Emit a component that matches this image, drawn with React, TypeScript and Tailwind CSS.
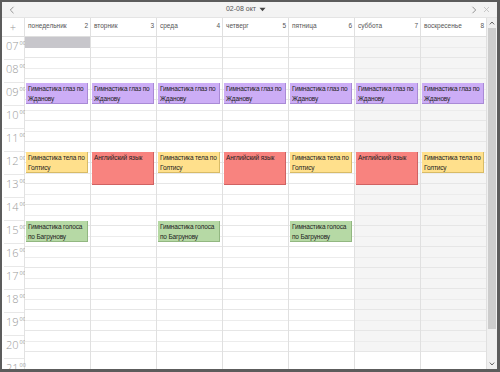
import React from "react";

const days: [string, number][] = [
  ["понедельник", 2],
  ["вторник", 3],
  ["среда", 4],
  ["четверг", 5],
  ["пятница", 6],
  ["суббота", 7],
  ["воскресенье", 8],
];

type Ev = { day: number; start: number; dur: number; title: string; cls: string };

const purple = "bg-[#ccadf6] border-[#a98ad6]";
const yellow = "bg-[#ffe08c] border-[#d8bb66]";
const red = "bg-[#f8837f] border-[#d06262]";
const green = "bg-[#b6d9a5] border-[#92b781]";

const events: Ev[] = [];
for (let d = 0; d < 7; d++) events.push({ day: d, start: 9, dur: 1, title: "Гимнастика глаз по Жданову", cls: purple });
[0, 2, 4, 6].forEach((d) => events.push({ day: d, start: 12, dur: 1, title: "Гимнастика тела по Голтису", cls: yellow }));
[1, 3, 5].forEach((d) => events.push({ day: d, start: 12, dur: 1.5, title: "Английский язык", cls: red }));
[0, 2, 4].forEach((d) => events.push({ day: d, start: 15, dur: 1, title: "Гимнастика голоса по Багрунову", cls: green }));

const hours = Array.from({ length: 15 }, (_, i) => 7 + i);
const HOUR = 23;

function HourCells({ weekend }: { weekend: boolean }) {
  return (
    <>
      {hours.map((h) => (
        <div key={h} className={weekend ? "bg-[#f5f5f5]" : "bg-white"}>
          <div className="h-[11px] border-b border-[#ececec]" />
          <div className="h-[10px] border-b border-[#e6e6e6]" />
        </div>
      ))}
    </>
  );
}

const small = { fontFamily: '"Liberation Sans", Arial, sans-serif' };

export default function App() {
  return (
    <div
      className="w-[500px] h-[372px] bg-[#5c5c5c] pt-[2px] pl-[2px] pr-[3px] pb-[3px] overflow-hidden"
      style={{ fontFamily: '"Open Sans", "Noto Sans", sans-serif' }}
    >
      <div className="w-[495px] h-[367px] bg-white flex flex-col overflow-hidden">
        {/* title bar */}
        <div className="h-[16px] bg-[#f3f3f3] border-b border-[#e4e4e4] flex items-center px-[6px] text-[#777]">
          <svg width="6" height="8" viewBox="0 0 6 8" className="ml-[1px]">
            <path d="M4.5 0.8 L1.3 4 L4.5 7.2" fill="none" stroke="#888" strokeWidth="0.9" />
          </svg>
          <div className="flex-1 flex items-center justify-center gap-[3px] text-[7px] text-[#555] pl-[6px]" style={small}>
            <span>02-08 окт</span>
            <svg width="7" height="5" viewBox="0 0 7 5">
              <path d="M0.5 0.8 L6.5 0.8 L3.5 4.3 Z" fill="#444" />
            </svg>
          </div>
          <svg width="6" height="8" viewBox="0 0 6 8" className="mr-[6px]">
            <path d="M1.5 0.8 L4.7 4 L1.5 7.2" fill="none" stroke="#888" strokeWidth="0.9" />
          </svg>
          <svg width="7" height="7" viewBox="0 0 7 7" className="mr-[1px]">
            <path d="M1 1 L6 6 M6 1 L1 6" stroke="#bbb" strokeWidth="0.8" />
          </svg>
        </div>
        <div className="flex flex-1 min-h-0">
          {/* calendar */}
          <div className="w-[485px] flex flex-col min-h-0">
            {/* header */}
            <div className="h-[19px] flex border-b border-[#dedede] bg-white">
              <div className="w-[23px] border-r border-[#e2e2e2] flex items-center justify-center text-[#999] text-[11px] font-light leading-none pb-[2px]">
                +
              </div>
              {days.map(([name, n]) => (
                <div
                  key={name}
                  className="w-[66px] border-r border-[#e0e0e0] flex items-center justify-between pl-[3px] pr-[2px] text-[6.5px] text-[#555] pb-[2px]"
                  style={small}
                >
                  <span>{name}</span>
                  <span>{n}</span>
                </div>
              ))}
            </div>
            {/* grid */}
            <div className="flex flex-1 min-h-0 overflow-hidden">
              <div className="w-[23px] border-r border-[#e2e2e2] shrink-0">
                {hours.map((h) => (
                  <div key={h} className="h-[23px] border-b border-[#e8e8e8] ml-[2px] relative">
                    <div className="flex items-start pl-[2px] pt-[3px] text-[#9a9a9a]">
                      <span className="text-[11px] font-light leading-[12px]">{String(h).padStart(2, "0")}</span>
                      <span className="text-[5.5px] leading-[6px] ml-[1px]">00</span>
                    </div>
                  </div>
                ))}
              </div>
              {days.map(([name], di) => (
                <div key={name} className="w-[66px] shrink-0 border-r border-[#e0e0e0] relative">
                  <HourCells weekend={di >= 5} />
                  {di === 0 && <div className="absolute left-0 right-0 top-0 h-[11px] bg-[#c7c6cb]" />}
                  {events
                    .filter((e) => e.day === di)
                    .map((e, i) => (
                      <div
                        key={i}
                        className={`absolute left-[1px] right-[2px] border-r border-b ${e.cls} text-[6.5px] tracking-[-0.15px] leading-[10px] text-[#222] pl-[2px] pt-[1px] overflow-hidden`}
                        style={{ ...small, top: (e.start - 7) * HOUR, height: e.dur * HOUR - 2 }}
                      >
                        {e.title}
                      </div>
                    ))}
                </div>
              ))}
            </div>
          </div>
          {/* scrollbar */}
          <div className="w-[10px] bg-[#f0f0f0] flex flex-col items-center">
            <div className="h-[10px] flex items-center justify-center">
              <svg width="6" height="4" viewBox="0 0 6 4">
                <path d="M0.8 3.4 L3 1 L5.2 3.4" fill="none" stroke="#555" strokeWidth="0.9" />
              </svg>
            </div>
            <div className="w-[8px] h-[301px] bg-[#cdcdcd]" />
            <div className="flex-1" />
            <div className="h-[10px] flex items-center justify-center">
              <svg width="6" height="4" viewBox="0 0 6 4">
                <path d="M0.8 0.6 L3 3 L5.2 0.6" fill="none" stroke="#555" strokeWidth="0.9" />
              </svg>
            </div>
          </div>
        </div>
      </div>
    </div>
  );
}
